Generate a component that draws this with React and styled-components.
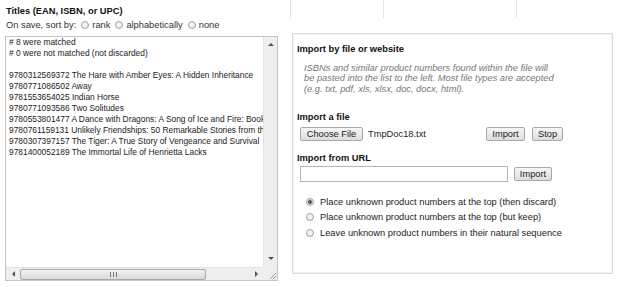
import React from 'react'
import styled, { createGlobalStyle } from 'styled-components'

const GlobalStyle = createGlobalStyle`
  html, body {
    margin: 0;
    padding: 0;
    background: #fff;
  }
  body {
    font-family: "Liberation Sans", Arial, sans-serif;
    font-size: 9.3px;
    color: #333;
  }
`

const lines = [
  '# 8 were matched',
  '# 0 were not matched (not discarded)',
  '',
  '9780312569372 The Hare with Amber Eyes: A Hidden Inheritance',
  '9780771086502 Away',
  '9781553654025 Indian Horse',
  '9780771093586 Two Solitudes',
  '9780553801477 A Dance with Dragons: A Song of Ice and Fire: Book 5',
  '9780761159131 Unlikely Friendships: 50 Remarkable Stories from the Animal Kingdom',
  '9780307397157 The Tiger: A True Story of Vengeance and Survival',
  '9781400052189 The Immortal Life of Henrietta Lacks',
]

function Arrow({ dir }) {
  const pts = {
    up: '0,4 3,1 6,4',
    down: '0,1 3,4 6,1',
    left: '4,0 1,3 4,6',
    right: '1,0 4,3 1,6',
  }[dir]
  const vertical = dir === 'up' || dir === 'down'
  return (
    <svg width={vertical ? 6 : 5} height={vertical ? 5 : 6} viewBox={vertical ? '0 0 6 5' : '0 0 5 6'}>
      <polygon points={pts} fill="#555" />
    </svg>
  )
}

function Grip() {
  return (
    <svg width="10" height="10" viewBox="0 0 10 10">
      <path d="M9 3 L3 9 M9 6 L6 9" stroke="#999" strokeWidth="1" />
    </svg>
  )
}

function App() {
  return (
    <>
      <GlobalStyle />
      <Page>
        <LeftCol>
          <Title>Titles (EAN, ISBN, or UPC)</Title>
          <SortRow>
            <span>On save, sort by:</span>
            <RadioLabel><Radio /> rank</RadioLabel>
            <RadioLabel><Radio /> alphabetically</RadioLabel>
            <RadioLabel><Radio /> none</RadioLabel>
          </SortRow>
          <TextBox>
            <TextContent>
              {lines.map((l, i) => (
                <Line key={i}>{l || '\u00a0'}</Line>
              ))}
            </TextContent>
            <VScroll>
              <Arrow dir="up" />
              <Arrow dir="down" />
            </VScroll>
            <HScroll>
              <ArrowCell><Arrow dir="left" /></ArrowCell>
              <Thumb>
                <svg width="7" height="5" viewBox="0 0 7 5">
                  <path d="M0.5 0 V5 M3.5 0 V5 M6.5 0 V5" stroke="#777" strokeWidth="1" />
                </svg>
              </Thumb>
              <Track />
              <ArrowCell><Arrow dir="right" /></ArrowCell>
            </HScroll>
            <Corner><Grip /></Corner>
          </TextBox>
        </LeftCol>
        <RightCol>
          <HeaderStrip>
            <HeaderCell $w={92} />
            <HeaderCell $w={132} />
            <HeaderCell $w={107} />
          </HeaderStrip>
          <Panel>
            <SectionTitle>Import by file or website</SectionTitle>
            <Hint>
              ISBNs and similar product numbers found within the file will<br />
              be pasted into the list to the left. Most file types are accepted<br />
              (e.g. txt, pdf, xls, xlsx, doc, docx, html).
            </Hint>
            <SubTitle>Import a file</SubTitle>
            <FileRow>
              <Button $w={63}>Choose File</Button>
              <FileName>TmpDoc18.txt</FileName>
              <Button $w={39}>Import</Button>
              <Button $w={31} $ml={7}>Stop</Button>
            </FileRow>
            <SubTitle $mt={11}>Import from URL</SubTitle>
            <UrlRow>
              <UrlInput />
              <Button $w={38}>Import</Button>
            </UrlRow>
            <Options>
              <OptionRow><Radio $checked /> Place unknown product numbers at the top (then discard)</OptionRow>
              <OptionRow><Radio /> Place unknown product numbers at the top (but keep)</OptionRow>
              <OptionRow><Radio /> Leave unknown product numbers in their natural sequence</OptionRow>
            </Options>
          </Panel>
        </RightCol>
      </Page>
    </>
  )
}

export default App

const Page = styled.div`
  display: flex;
  align-items: flex-start;
  width: 624px;
  height: 287px;
  overflow: hidden;
`

const LeftCol = styled.div`
  width: 288px;
  padding-left: 5px;
  display: flex;
  flex-direction: column;
`

const Title = styled.div`
  margin-top: 5px;
  padding-left: 1px;
  font-weight: bold;
  line-height: 12px;
  color: #111;
`

const SortRow = styled.div`
  display: flex;
  align-items: center;
  margin-top: 1px;
  padding-left: 1px;
  height: 14px;
  line-height: 12px;
  gap: 5px;
  color: #333;
`

const RadioLabel = styled.label`
  display: flex;
  align-items: center;
  gap: 3px;
`

const Radio = styled.span`
  display: inline-block;
  box-sizing: border-box;
  width: 8px;
  height: 8px;
  border-radius: 50%;
  border: 1px solid #a3a3a3;
  background: ${p =>
    p.$checked
      ? 'radial-gradient(circle, #3b4a5a 0, #56667a 1.6px, #d8dde3 2.4px, #eef0f2 100%)'
      : 'radial-gradient(circle at 40% 40%, #fafafa 0, #e2e2e2 100%)'};
  flex-shrink: 0;
`

const TextBox = styled.div`
  margin-top: 4px;
  width: 273px;
  height: 245px;
  box-sizing: border-box;
  border: 1px solid #c4c4c4;
  display: grid;
  grid-template-columns: 1fr 14px;
  grid-template-rows: 1fr 13px;
  overflow: hidden;
`

const TextContent = styled.div`
  padding: 0 0 0 3px;
  overflow: hidden;
  font-size: 8.4px;
  line-height: 11px;
  color: #222;
`

const Line = styled.div`
  white-space: pre;
`

const VScroll = styled.div`
  background: #efefef;
  border-left: 1px solid #e2e2e2;
  display: flex;
  flex-direction: column;
  align-items: center;
  justify-content: space-between;
  padding: 5px 0 6px;
`

const HScroll = styled.div`
  background: #efefef;
  border-top: 1px solid #e2e2e2;
  display: flex;
  align-items: center;
`

const ArrowCell = styled.div`
  width: 14px;
  display: flex;
  justify-content: center;
`

const Thumb = styled.div`
  width: 186px;
  height: 11px;
  box-sizing: border-box;
  border: 1px solid #a8a8a8;
  border-radius: 2px;
  background: linear-gradient(#f3f3f3, #d8d8d8);
  display: flex;
  align-items: center;
  justify-content: center;
`

const Track = styled.div`
  flex: 1;
`

const Corner = styled.div`
  background: #efefef;
  display: flex;
  align-items: flex-end;
  justify-content: flex-end;
`

const RightCol = styled.div`
  display: flex;
  flex-direction: column;
`

const HeaderStrip = styled.div`
  display: flex;
  height: 18px;
`

const HeaderCell = styled.div`
  width: ${p => p.$w}px;
  border-left: 1px solid #e4e4e4;
`

const Panel = styled.div`
  margin-top: 15px;
  margin-left: 2px;
  width: 321px;
  height: 241px;
  box-sizing: border-box;
  border: 1px solid #dcdcdc;
  box-shadow: inset 0 0 0 1px #f2f2f2;
  padding: 9px 0 0 4px;
  display: flex;
  flex-direction: column;
`

const SectionTitle = styled.div`
  font-weight: bold;
  line-height: 12px;
  color: #111;
`

const Hint = styled.div`
  margin-top: 8px;
  padding-left: 7px;
  font-style: italic;
  color: #777;
  line-height: 10.3px;
`

const SubTitle = styled.div`
  margin-top: ${p => p.$mt ?? 17}px;
  font-weight: bold;
  line-height: 12px;
  color: #111;
`

const FileRow = styled.div`
  display: flex;
  align-items: center;
  margin-top: 4px;
  padding-left: 3px;
`

const Button = styled.div`
  width: ${p => p.$w}px;
  margin-left: ${p => p.$ml ?? 0}px;
  height: 14px;
  box-sizing: border-box;
  border: 1px solid #a9a9a9;
  border-radius: 2px;
  background: linear-gradient(#f6f6f6, #dddddd);
  display: flex;
  align-items: center;
  justify-content: center;
  color: #222;
  line-height: 12px;
  white-space: nowrap;
`

const FileName = styled.span`
  margin-left: 5px;
  width: 118px;
  white-space: nowrap;
  color: #222;
`

const UrlRow = styled.div`
  display: flex;
  align-items: center;
  gap: 6px;
  margin-top: 2px;
  padding-left: 3px;
`

const UrlInput = styled.div`
  width: 208px;
  height: 16px;
  box-sizing: border-box;
  border: 1px solid #b5b5b5;
  background: #fff;
`

const Options = styled.div`
  margin-top: 14px;
  padding-left: 9px;
  display: flex;
  flex-direction: column;
  gap: 3.5px;
`

const OptionRow = styled.label`
  display: flex;
  align-items: center;
  gap: 6px;
  line-height: 12px;
  color: #222;
`
